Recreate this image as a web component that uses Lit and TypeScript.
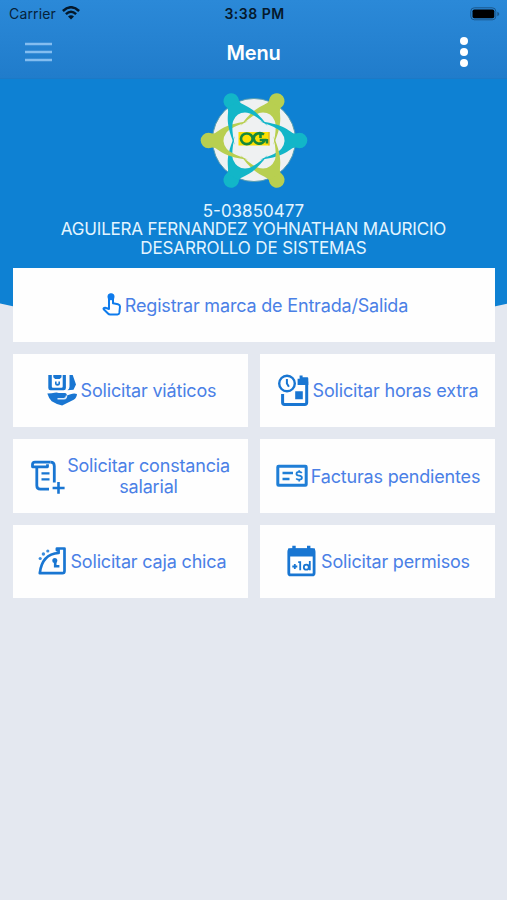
import { LitElement, html, css, svg } from "lit";
import { customElement, property } from "lit/decorators.js";

const icons: Record<string, { box: string; width: number; height: number; art: unknown }> = {
  tap: {
    box: "102 291.500 23 27", width: 23, height: 27,
    art: svg`<g fill="none" stroke="#0e7bec" stroke-width="2" stroke-linejoin="round" stroke-linecap="round">
      <path d="M109 309.5V297.2a2 2 0 0 1 4 0v6.600l5 .9q2 .5 2 2.300l-.6 6.200q-.3 1.800-2 1.800h-7.200q-1.300 0-2.200-1l-4.300-4.300q-.5-.8.500-1.300 1-.4 2 .1z"/></g>
      <circle cx="111" cy="297.300" r="3.500" fill="#0e7bec"/>`,
  },
  cash: {
    box: "47 373.500 34 34", width: 34, height: 34,
    art: svg`<path d="M48.300 375.500h3.500V387q0 1.200 1.200 1.200h8.500q1.200 0 1.200-1.200V375.500h3.200V388.500q0 2.200-2.200 2.200H50.500q-2.200 0-2.200-2.200z" fill="#1976d2"/>
      <path d="M53.300 375.500h8.200v2.300l-1.800 1.700h-4.600l-1.800-1.700zM55 382h1.600v2.200h1.800V382H60v2.300q0 2-2.500 2t-2.500-2zM69.500 375.500h3.200L76 385l-2.500 5.200-6 .5q2-1.400 2-3.500z" fill="#1976d2"/>
      <path d="M47.300 394q5-.2 7.200-.8 2.400-.7 4.300.3l6.500.1q2 .6 1.500 2.300l3.700-1.100q3.500-1.600 6.500-.3-.2 3.800-3.300 5.800l-11.600 5.600q-5.500-1-10.400-4.200-3.200-3.500-4.400-7.700z" fill="#1976d2"/>
      <path d="M57.500 399.300h6.300q3-.4 2.700-3.300" fill="none" stroke="#dcecfb" stroke-width="1.400"/>`,
  },
  hours: {
    box: "279 373.500 34 34", width: 34, height: 34,
    art: svg`<path d="M282.600 394.500V403q0 1.900 1.900 1.900h20.300q1.900 0 1.900-1.900V382" fill="none" stroke="#1976d2" stroke-width="3"/>
      <path d="M297.600 385.500v-6.200h2v-3.200h3v1.600h5q.7.300.7 1.500v6.300zM295.200 391.800h7.600v8h-7.600z" fill="#1976d2"/>
      <circle cx="287" cy="384" r="7.800" fill="#fff" stroke="#1976d2" stroke-width="2.400"/>
      <path d="M286.900 379.500v4.500l2 3.300" fill="none" stroke="#1976d2" stroke-width="2"/>`,
  },
  scroll: {
    box: "33 459.500 34 34", width: 34, height: 34,
    art: svg`<g fill="none" stroke="#1976d2" stroke-width="2.800" stroke-linejoin="round">
      <path d="M36.800 468V486q0 3.600 3.600 3.600H49M50.500 462.600q3.800 0 3.800 3.800V483"/>
      <path d="M50.500 462.600H35q-2.500 0-2.500 2.400v2.300H47.500v-2.500"/></g>
      <path d="M41.500 473.800h8M41.500 479.800h8" stroke="#1976d2" stroke-width="2.300"/>
      <path d="M58.500 482.400v11.800M52.600 488.500h12" stroke="#1976d2" stroke-width="2.600"/>`,
  },
  invoice: {
    box: "277 459.500 34 34", width: 34, height: 34,
    art: svg`<rect x="277.800" y="466.800" width="28.400" height="19" rx=".8" fill="none" stroke="#1f7ed6" stroke-width="3"/>
      <path d="M282.500 473.500h10.500M282.500 479.500h7" stroke="#1f7ed6" stroke-width="2.400"/>
      <path d="M301.800 473.500q-1-1.200-3-1.100-2.300.2-2.300 1.900t2.600 1.900q2.800.3 2.800 2.100t-2.500 1.900q-2.200 0-3.200-1.200M299.200 470.700v1.800M299.200 480v1.900" fill="none" stroke="#1f7ed6" stroke-width="1.800"/>`,
  },
  safe: {
    box: "37 545 34 34", width: 34, height: 34,
    art: svg`<path d="M39.800 574.200q2.200-19.200 18.800-20.200v-2.800h-1.700v-1.700h7.600V572q0 2.200-2.200 2.200z" fill="none" stroke="#1976d2" stroke-width="2.700" stroke-linejoin="round"/>
      <circle cx="40.200" cy="559.500" r="1.600" fill="#3b8ddd"/><circle cx="43.400" cy="555" r="1.700" fill="#3b8ddd"/><circle cx="47.800" cy="552" r="1.600" fill="#3b8ddd"/>
      <circle cx="54.800" cy="561.500" r="2.500" fill="#1976d2"/><path d="M55.200 561.500v5.800h4.200" fill="none" stroke="#1976d2" stroke-width="2.600"/>`,
  },
  permit: {
    box: "287.500 544.500 34 34", width: 34, height: 34,
    art: svg`<rect x="289.300" y="550.200" width="25.300" height="25.200" rx="2" fill="#fff" stroke="#1976d2" stroke-width="2.800"/>
      <path d="M288.500 549h27v8h-27zM292.800 546.300h3.400v4h-3.400zM307.500 546.300h3.400v4h-3.400z" fill="#1976d2"/>
      <path d="M292.800 567h5M295.300 564.500v5M298.700 562.700h2v8.100M310.300 561.500v9.300" fill="none" stroke="#1976d2" stroke-width="1.800"/>
      <circle cx="306.800" cy="567.700" r="2.500" fill="none" stroke="#1976d2" stroke-width="1.800"/>`,
  },
};

@customElement("menu-tile")
class MenuTile extends LitElement {
  @property() icon = "";
  @property() label = "";

  static styles = css`
    :host { display: flex; align-items: center; justify-content: center; background: #fefefe; height: 73.500px; box-sizing: border-box; padding: 0 0 0 2px; }
    .icon { flex: none; display: block; overflow: visible; }
    .label { color: #4a80e6; font: 400 18px/21.500px Inter, sans-serif; letter-spacing: -.18px; text-align: center; white-space: pre-line; padding-top: 1px; }
  `;

  render() {
    const i = icons[this.icon];
    return html`<svg class="icon" width=${i.width} height=${i.height} viewBox=${i.box}>${i.art}</svg><span class="label">${this.label}</span>`;
  }
}

const figure = (angle: number, color: string) => svg`<g transform="rotate(${angle})" fill=${color}>
  <circle cx="0" cy="-45.500" r="7.800"/>
  <path d="M-7-42C-6-36-16-35-19-6-15.500-16-12-24.500-8-27.500Q0-33.500 8-27.500C12-24.500 15.500-16 19-6 16-35 6-36 7-42z"/></g>`;

@customElement("app-root")
class AppRoot extends LitElement {
  static styles = css`
    :host { display: block; height: 900px; background: #e4e8f0; font-family: Inter, sans-serif; overflow: hidden; }
    .top { height: 79px; box-sizing: border-box; background: linear-gradient(#2b89d8, #207ccb); border-bottom: 1px solid #1c79c6; }
    .status { height: 28px; display: grid; grid-template-columns: 1fr auto 1fr; align-items: center; padding: 0 7px 0 9px; font-size: 14px; line-height: 28px; color: #06223a; }
    .carrier { display: flex; align-items: center; gap: 6px; letter-spacing: .15px; }
    .wifi { margin-bottom: 2px; }
    .time { font-weight: 600; color: #05192c; letter-spacing: .5px; }
    .battery { justify-self: end; margin-bottom: 1px; }
    .bar { height: 48px; display: grid; grid-template-columns: 1fr auto 1fr; align-items: center; padding: 0 25px; }
    .title { color: #fff; font-size: 20px; font-weight: 600; letter-spacing: -.2px; padding-top: 1px; }
    .dots { justify-self: end; margin-right: 12px; }
    .hero { position: relative; overflow: hidden; height: 263px; margin-bottom: -74px; text-align: center; color: #e3f5ff; }
    .hero::before { content: ""; position: absolute; top: 0; left: 50%; width: 800px; height: 250px; margin-left: -400px; background: #0e81d3; border-radius: 0 0 50% 50% / 0 0 112px 112px; }
    .logo { display: block; position: relative; margin: 0 auto; }
    .who { position: relative; font-size: 17px; line-height: 18.400px; padding-top: 3px; }
    .who div { white-space: nowrap; }
    .id { letter-spacing: 0; }
    .name { letter-spacing: -.19px; }
    .dept { letter-spacing: -.14px; }
    .tiles { position: relative; display: grid; grid-template-columns: 235px 235px; gap: 12px; margin: 0 12px 0 13px; }
    .wide { grid-column: 1 / -1; }
  `;

  render() {
    return html`
      <header class="top">
        <div class="status">
          <span class="carrier">Carrier
            <svg class="wifi" width="18" height="14" viewBox="0 0 18 14"><g fill="none" stroke="#04182a" stroke-width="2.500"><path d="M.9 5Q9-2.500 17.100 5"/><path d="M3.900 8.200Q9 3.400 14.100 8.200"/></g><path d="M6 10.500Q9 7.800 12 10.500L9 13.500z" fill="#04182a"/></svg>
          </span>
          <span class="time">3:38 PM</span>
          <svg class="battery" width="30" height="14" viewBox="0 0 30 14"><rect x=".8" y=".8" width="25" height="12" rx="3.500" fill="none" stroke="#1b588c"/><rect x="2.500" y="2.500" width="21.800" height="8.800" rx="1.800" fill="#000"/><path d="M27.300 4.800q2 .8 2 2.200t-2 2.200z" fill="#1b588c"/></svg>
        </div>
        <div class="bar">
          <svg width="28" height="22" viewBox="0 0 28 22"><path d="M0 3h27M0 11h27M0 19h27" stroke="#83bdf0" stroke-width="2.300"/></svg>
          <span class="title">Menu</span>
          <svg class="dots" width="12" height="32" viewBox="0 0 12 32" fill="#fff"><circle cx="6" cy="5" r="4"/><circle cx="6" cy="16" r="4"/><circle cx="6" cy="27" r="4"/></svg>
        </div>
      </header>
      <section class="hero">
        <svg class="logo" width="128" height="120" viewBox="190 79 128 120">
          <circle cx="254" cy="140" r="41.500" fill="#eff1f2" stroke="#579db0" stroke-width="1"/>
          <g transform="translate(254 140.500)">
            ${[30, 90, 150, 210, 270, 330].map((a, n) => figure(a, n % 2 ? "#12b6c8" : "#b8cf50"))}
          </g>
          <rect x="238.500" y="132" width="31" height="13.500" fill="#fce000"/>
          <g fill="none" stroke="#16883b" stroke-width="2.600"><ellipse cx="246.800" cy="138.800" rx="5.800" ry="5.300"/><path d="M264 134.500q-3-2-6.500-1-4 1.500-3.800 5t4 5q5 1 7-3.500h-5M260.500 134v4M267 139v4.500"/></g>
          <path d="M269 132v13.500" stroke="#d5a52c" stroke-width="1"/>
        </svg>
        <div class="who">
          <div class="id">5-03850477</div>
          <div class="name">AGUILERA FERNANDEZ YOHNATHAN MAURICIO</div>
          <div class="dept">DESARROLLO DE SISTEMAS</div>
        </div>
      </section>
      <main class="tiles">
        <menu-tile class="wide" icon="tap" label="Registrar marca de Entrada/Salida"></menu-tile>
        <menu-tile icon="cash" label="Solicitar viáticos"></menu-tile>
        <menu-tile icon="hours" label="Solicitar horas extra"></menu-tile>
        <menu-tile icon="scroll" .label=${"Solicitar constancia\nsalarial"}></menu-tile>
        <menu-tile icon="invoice" label="Facturas pendientes"></menu-tile>
        <menu-tile icon="safe" label="Solicitar caja chica"></menu-tile>
        <menu-tile icon="permit" label="Solicitar permisos"></menu-tile>
      </main>`;
  }
}
